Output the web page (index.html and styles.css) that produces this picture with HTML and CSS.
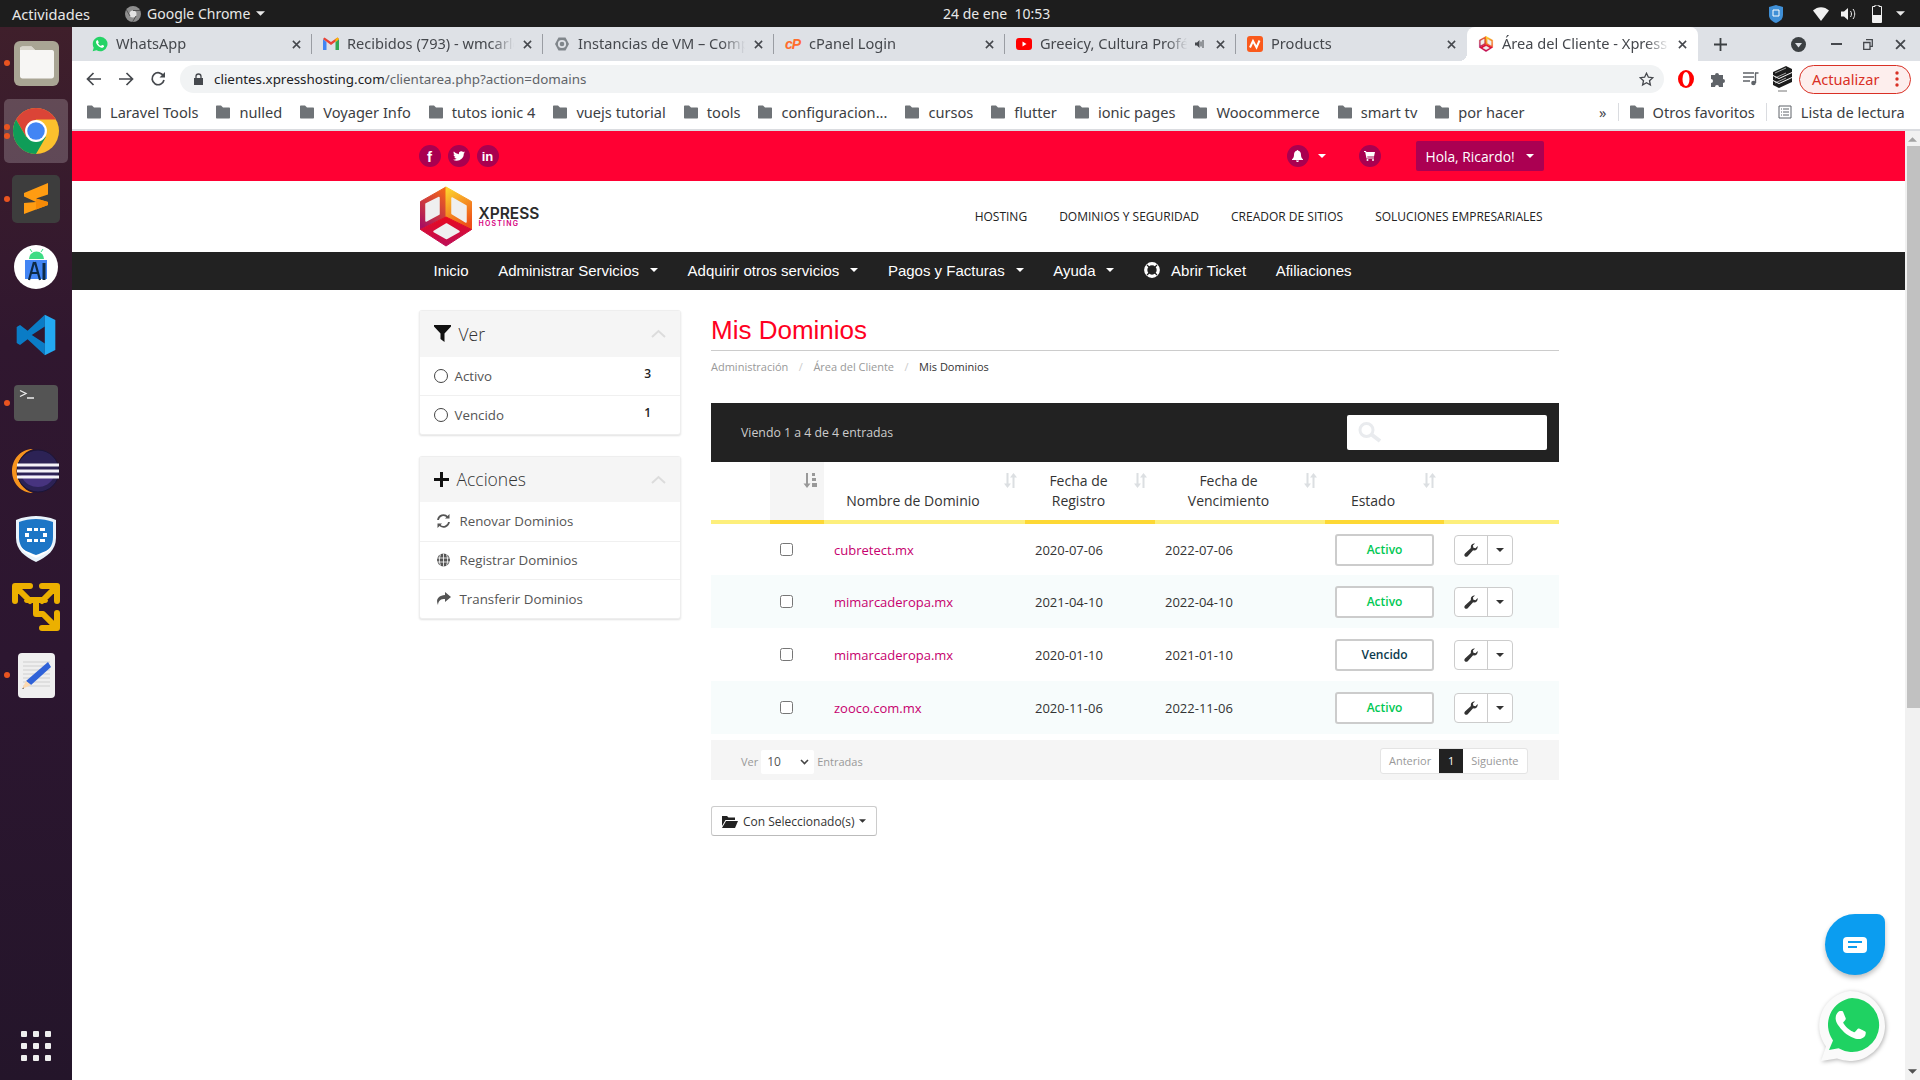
FILE: index.html
```html
<!DOCTYPE html>
<html>
  <head>
    <meta charset="UTF-8" />
    <title>Mis Dominios</title>
    <link rel="stylesheet" href="styles.css">
  </head>
  <body>
    <svg class="defs" width="0" height="0">
      <symbol id="folder" viewBox="0 0 14 14"><path d="M0 1.500C0 .9.4.5 1 .5h4l2 2h6c.6 0 1 .4 1 1v9c0 .6-.4 1-1 1H1c-.6 0-1-.4-1-1z"/></symbol>
      <symbol id="close" viewBox="0 0 10 10"><path d="M1 1l8 8M9 1l-8 8" stroke="#45484d" stroke-width="1.700" fill="none"/></symbol>
      <symbol id="caret" viewBox="0 0 8 4"><path d="M0 0h8L4 4z"/></symbol>
      <symbol id="sort" viewBox="0 0 13 15"><path d="M3 0v10.500H.5L4 15l3.500-4.500H5V0zM10 0L6.500 4.500H9V15h2V4.500h2.500z" transform="translate(-.5)"/></symbol>
      <symbol id="wrench" viewBox="0 0 14 14"><path d="M13.600 3.100c.5 2.300-1.300 4.500-3.600 4.300l-.9-.1-5.400 5.900c-.8.800-2.100.8-2.800 0-.8-.8-.7-2 .1-2.700l5.900-5.400-.1-.9C6.600 1.900 8.700.1 11 .5L8.900 2.600l.5 2.200 2.100.5z"/></symbol>
      <symbol id="xlogo" viewBox="0 0 54 61">
        <defs>
          <linearGradient id="lf" x1="0.700" y1="0" x2="0.200" y2="1"><stop offset="0" stop-color="#f0641c"/><stop offset="1" stop-color="#a80f62"/></linearGradient>
          <linearGradient id="rf" x1="0.200" y1="0" x2="0.600" y2="1"><stop offset="0" stop-color="#fcd22e"/><stop offset="1" stop-color="#ee4e17"/></linearGradient>
          <linearGradient id="bf" x1="0.500" y1="0" x2="0.500" y2="1"><stop offset="0" stop-color="#e9091e"/><stop offset="1" stop-color="#bd0f58"/></linearGradient>
        </defs>
        <path d="M27 1L1.500 15.500v28L27 31z" fill="url(#lf)" stroke="url(#lf)" stroke-linejoin="round"/>
        <path d="M27 1l25.500 14.500v28L27 31z" fill="url(#rf)" stroke="url(#rf)" stroke-linejoin="round"/>
        <path d="M1.500 43.500L27 31l25.500 12.500L27 60z" fill="url(#bf)" stroke="url(#bf)" stroke-linejoin="round"/>
        <path d="M7 18l13-6.500V28L7 35zM33 12l14 8v16l-14-8.500zM15 45.500L27.500 38 40 45.500 27.500 52.500z" fill="#efefef" stroke="#efefef" stroke-width="1.500" stroke-linejoin="round"/>
      </symbol>
    </svg>

    <div class="gnome-bar">
      <div class="gnome-left">
        <span class="activities">Actividades</span>
        <svg class="gnome-chrome" width="16" height="16" viewBox="0 0 16 16"><circle cx="8" cy="8" r="8" fill="#8e8e8e"/><circle cx="8" cy="8" r="3.500" fill="#e4e4e4"/><path d="M8 4.500h7M5 10L1.500 4M11 10l-3.500 6" stroke="#555" stroke-width="1"/></svg>
        <span>Google Chrome</span>
        <svg class="gnome-caret" width="9" height="5"><use href="#caret" fill="#e8e8e8"/></svg>
      </div>
      <div class="gnome-clock">24 de ene&nbsp;&nbsp;10:53</div>
      <div class="gnome-tray">
        <svg class="tray-shield" width="14" height="18" viewBox="0 0 14 18"><path d="M7 0l7 2v8c0 4-3 6.500-7 8-4-1.500-7-4-7-8V2z" fill="#3f8fd6"/><path d="M4 5h6v6H4z" fill="none" stroke="#fff"/></svg>
        <svg class="tray-wifi" width="16" height="14" viewBox="0 0 16 14"><path d="M0 3.500C4.500-1 11.500-1 16 3.500L8 14z" fill="#f0f0f0"/></svg>
        <svg class="tray-vol" width="16" height="14" viewBox="0 0 16 14"><path d="M0 4.500h3L7 1v12L3 9.500H0z" fill="#f0f0f0"/><path d="M9.500 4c1.300 1.800 1.300 4.200 0 6M12 2c2.300 3 2.300 7 0 10" stroke="#f0f0f0" fill="none"/></svg>
        <svg class="tray-batt" width="10" height="18" viewBox="0 0 10 18"><path d="M3 0h4v1.500h2.500v16H.5v-16H3z" fill="none" stroke="#f0f0f0"/><path d="M1 10h8v7H1z" fill="#f0f0f0"/></svg>
        <svg width="9" height="5"><use href="#caret" fill="#e8e8e8"/></svg>
      </div>
    </div>

    <div class="desk">
      <aside class="dock">
        <div class="dock-slot running">
          <svg width="45" height="45" viewBox="0 0 45 45"><rect width="45" height="45" rx="6" fill="#a9a594"/><path d="M6 8c0-1.500 1-2.500 2.500-2.500h9L21 9h17c1.500 0 2 1 2 2.500V35c0 1.500-1 2.500-2.500 2.500h-29C7 37.500 6 36.500 6 35z" fill="#f7f6f4"/><path d="M6 9h15l-3.500-3.500h-9C7 5.500 6 6.500 6 9z" fill="#d9d6cc"/></svg>
        </div>
        <div class="dock-slot active running two">
          <svg width="46" height="46" viewBox="4 4 40 40"><circle cx="24" cy="24" r="20" fill="#fbc02d"/><path d="M6.680 14A20 20 0 0 1 41.320 14H24L15.340 29z" fill="#db4437"/><path d="M6.680 14A20 20 0 0 0 24 44L32.660 29H15.340z" fill="#0f9d58"/><circle cx="24" cy="24" r="9.500" fill="#fff"/><circle cx="24" cy="24" r="7.600" fill="#4285f4"/></svg>
        </div>
        <div class="dock-slot running">
          <svg width="48" height="48" viewBox="0 0 48 48"><rect width="48" height="48" rx="5" fill="#3d3d3d"/><path d="M12 18L36 8v11.500L24 23.500 36 27v3L12 39V28l12-1-12-5.500z" fill="#ff9c12"/><path d="M24 23.500L36 27v3L24 34.500z" fill="#f58a07"/></svg>
        </div>
        <div class="dock-slot">
          <svg width="44" height="44" viewBox="0 0 44 44"><circle cx="22" cy="22" r="22" fill="#fff"/><path d="M11 15h22v19H11z" fill="#4285f4"/><path d="M15 14a7.500 7.500 0 0 1 15 0z" fill="#3ddc84"/><path d="M18 7l-2-3M27 7l2-3" stroke="#3ddc84"/><path d="M20 17L15 35M21 17l5 18M17 28h8" stroke="#0d2a45" stroke-width="2.200" fill="none"/><path d="M30 18v17" stroke="#0d2a45" stroke-width="3"/></svg>
        </div>
        <div class="dock-slot">
          <svg width="42" height="42" viewBox="0 0 100 100"><path d="M71 2L30 40 12 26 4 31v38l8 5 18-14 41 38V70L40 50l31-20z" fill="#0a7cc6"/><path d="M71 2l25 12v72L71 98z" fill="#23a9f2"/></svg>
        </div>
        <div class="dock-slot running">
          <svg width="44" height="36" viewBox="0 0 44 36"><rect width="44" height="36" rx="4" fill="#545454"/><path d="M6 5.500l6 3-6 3" stroke="#eee" stroke-width="1.300" fill="none"/><path d="M13 13h7" stroke="#eee" stroke-width="1.500"/></svg>
        </div>
        <div class="dock-slot">
          <svg width="48" height="44" viewBox="0 0 48 44"><path d="M21 0C9 0 0 10 0 22s9 22 21 22C11 41 5 32 5 22S11 3 21 0z" fill="#f7941e"/><circle cx="26" cy="22" r="21" fill="#2c2255" stroke="#1b1538"/><path d="M9 26c3 9 11 12 17 12s13-3 17-12z" fill="#47347f"/><path d="M5 14.500h42v3H5zM5 20.500h42v3H5zM5 26.500h42v3H5z" fill="#f4f2f8"/></svg>
        </div>
        <div class="dock-slot">
          <svg width="40" height="46" viewBox="0 0 40 46"><path d="M20 0c6 0 13 1 20 4v18c0 12-9 19-20 24C9 41 0 34 0 22V4c7-3 14-4 20-4z" fill="#e9f3fb"/><path d="M20 3c6 0 12 1 17 3v15c0 7-3 12-7 15l-10 5-10-5c-4-3-7-8-7-15V6c5-2 11-3 17-3z" fill="#1c76c6"/><path d="M11 12h5v3h-5zM18 12h4v3h-4zM24 12h5v3h-5zM9 17h4v4H9zM27 17h4v4h-4zM11 23h5v3h-5zM18 23h4v3h-4zM24 23h5v3h-5z" fill="#fff"/><path d="M3 28c2 7 8 10 17 14 9-4 15-7 17-14-3 6-9 8-17 11-8-3-14-5-17-11z" fill="#fff"/></svg>
        </div>
        <div class="dock-slot">
          <svg width="48" height="48" viewBox="0 0 48 48" fill="none" stroke="#ecb000" stroke-width="6" stroke-linecap="round" stroke-linejoin="round"><path d="M3 18V3h15M5 5l13 13M45 18V3H30M43 5L30 18M15 17h18M24 17v9M45 30v15H30M43 43L31 31h-7v-5"/></svg>
        </div>
        <div class="dock-slot running">
          <svg width="37" height="45" viewBox="0 0 37 45"><rect width="37" height="45" rx="4" fill="#efefef"/><path d="M5 9h27M5 13h27M5 17h27M5 21h27M5 25h27M5 29h27M5 33h27" stroke="#cfcfcf"/><path d="M30 9l3 5-20 18-5-4z" fill="#2f62d8"/><path d="M8 28l5 4-9 4z" fill="#fbd9b0"/><path d="M5.500 34.500L4 36l2-.5z" fill="#444"/></svg>
        </div>
        <div class="dock-apps">
          <i></i><i></i><i></i><i></i><i></i><i></i><i></i><i></i><i></i>
        </div>
      </aside>

      <div class="browser">
        <div class="tabstrip">
          <div class="tab">
            <svg class="favicon" viewBox="0 0 24 24"><path d="M12 1a11 11 0 0 0-9.400 16.500L1 23l5.700-1.500A11 11 0 1 0 12 1z" fill="#25d366"/><path d="M17.500 14.400c-.3-.15-1.760-.87-2.030-.97-.27-.1-.47-.15-.67.15-.2.3-.77.97-.94 1.160-.17.2-.35.22-.64.07-.3-.15-1.260-.46-2.390-1.470-.88-.79-1.480-1.760-1.650-2.060-.17-.3-.02-.46.13-.6.13-.13.3-.35.45-.52.15-.17.2-.3.3-.5.1-.2.05-.37-.02-.52-.07-.15-.67-1.610-.92-2.200-.24-.58-.49-.5-.67-.51h-.57c-.2 0-.52.07-.79.37-.27.3-1.040 1.020-1.040 2.480s1.070 2.880 1.210 3.070c.15.2 2.100 3.200 5.080 4.490.71.3 1.260.49 1.690.62.71.23 1.360.2 1.870.12.57-.09 1.760-.72 2-1.410.25-.7.25-1.290.17-1.410-.07-.13-.27-.2-.57-.35z" fill="#fff"/></svg>
            <span class="tab-title">WhatsApp</span>
            <svg class="tab-close"><use href="#close"/></svg>
          </div>
          <div class="tab">
            <svg class="favicon" viewBox="0 0 16 16"><path d="M0 3v11h3.500V6z" fill="#4285f4"/><path d="M12.500 6v8H16V3z" fill="#34a853"/><path d="M0 3l8 6 8-6-1.500-1.500L8 6 1.500 1.500z" fill="#ea4335"/><path d="M12.500 6L16 3l-1.500-1.500-2 1.500z" fill="#fbbc04"/></svg>
            <span class="tab-title">Recibidos (793) - wmcarlos</span>
            <svg class="tab-close"><use href="#close"/></svg>
          </div>
          <div class="tab">
            <svg class="favicon" viewBox="0 0 16 16"><path d="M4.500 1.500h7L15 8l-3.500 6.500h-7L1 8z" fill="#80868b"/><circle cx="8" cy="8" r="3.200" fill="none" stroke="#dee1e6" stroke-width="1.800"/></svg>
            <span class="tab-title">Instancias de VM – Compute</span>
            <svg class="tab-close"><use href="#close"/></svg>
          </div>
          <div class="tab">
            <span class="favicon cpanel-icon">cP</span>
            <span class="tab-title">cPanel Login</span>
            <svg class="tab-close"><use href="#close"/></svg>
          </div>
          <div class="tab">
            <svg class="favicon" viewBox="0 0 16 16"><rect y="2" width="16" height="12" rx="3" fill="#f00"/><path d="M6.500 5.500L10.500 8l-4 2.500z" fill="#fff"/></svg>
            <span class="tab-title">Greeicy, Cultura Profética</span>
            <svg class="tab-audio" width="10" height="10" viewBox="0 0 10 10"><path d="M0 3.500h2L4.500 1v8L2 6.500H0z" fill="#45484d"/><path d="M6 2.500v5M8 1v8" stroke="#45484d"/></svg>
            <svg class="tab-close"><use href="#close"/></svg>
          </div>
          <div class="tab">
            <svg class="favicon" viewBox="0 0 16 16"><rect width="16" height="16" rx="3" fill="#fa5a1c"/><path d="M3 11.500L6 5l3.500 6.500L12.500 4.500" stroke="#fff" stroke-width="2" fill="none"/></svg>
            <span class="tab-title">Products</span>
            <svg class="tab-close"><use href="#close"/></svg>
          </div>
          <div class="tab tab-active">
            <svg class="favicon"><use href="#xlogo"/></svg>
            <span class="tab-title">Área del Cliente - Xpress Hosting</span>
            <svg class="tab-close"><use href="#close"/></svg>
          </div>
          <svg class="tab-new" width="13" height="13" viewBox="0 0 13 13"><path d="M6.500 0v13M0 6.500h13" stroke="#3c4043" stroke-width="1.800"/></svg>
          <div class="win-controls">
            <svg class="win-search" width="15" height="15" viewBox="0 0 15 15"><circle cx="7.500" cy="7.500" r="7.500" fill="#3c4043"/><path d="M4 6h7l-3.500 4.500z" fill="#dee1e6"/></svg>
            <svg class="win-min" width="11" height="2"><path d="M0 1h11" stroke="#45484d" stroke-width="2"/></svg>
            <svg class="win-max" width="10" height="11" viewBox="0 0 10 11"><path d="M3 .7h6.300v6.600H7M.7 3.500H7v6.800H.7z" fill="none" stroke="#45484d" stroke-width="1.300"/></svg>
            <svg class="win-close" width="11" height="11"><use href="#close"/></svg>
          </div>
        </div>

        <div class="toolbar">
          <svg class="tool-ico" width="16" height="14" viewBox="0 0 16 14"><path d="M15 7H2M7.500 1L1.500 7l6 6" fill="none" stroke="#45484d" stroke-width="1.700"/></svg>
          <svg class="tool-ico" width="16" height="14" viewBox="0 0 16 14"><path d="M1 7h13M8.500 1l6 6-6 6" fill="none" stroke="#45484d" stroke-width="1.700"/></svg>
          <svg class="tool-ico" width="16" height="16" viewBox="0 0 16 16"><path d="M13.500 5A6 6 0 1 0 14 9" fill="none" stroke="#45484d" stroke-width="1.700"/><path d="M15 1v5.500H9.500z" fill="#45484d"/></svg>
          <div class="omnibox">
            <svg width="9" height="12" viewBox="0 0 9 12"><path d="M0 5h9v7H0z" fill="#45484d"/><path d="M2 5V3.500a2.500 2.500 0 0 1 5 0V5" fill="none" stroke="#45484d" stroke-width="1.300"/></svg>
            <span class="url"><b>clientes.xpresshosting.com</b>/clientarea.php?action=domains</span>
            <svg class="star" width="15" height="15" viewBox="0 0 15 15"><path d="M7.500 1.200l1.900 4 4.400.5-3.300 3 .9 4.300-3.900-2.200L3.600 13l.9-4.300-3.300-3 4.400-.5z" fill="none" stroke="#45484d" stroke-width="1.300"/></svg>
          </div>
          <div class="extensions">
            <svg width="16" height="18" viewBox="0 0 16 18"><ellipse cx="8" cy="9" rx="8" ry="9" fill="#f00"/><ellipse cx="8" cy="9" rx="3.500" ry="7" fill="#fff"/></svg>
            <svg width="15" height="16" viewBox="0 0 15 16"><path d="M0 4h4a2 2 0 0 1 4 0h4v4a2 2 0 0 1 0 4v4H8a2 2 0 0 0-4 0H0v-4a2 2 0 0 0 0-4z" fill="#5f6368"/></svg>
            <svg width="16" height="14" viewBox="0 0 16 14"><path d="M0 1h11M0 5h11M0 9h7" stroke="#5f6368" stroke-width="1.400"/><path d="M12 1h3.500M12.500 1v10" stroke="#5f6368" stroke-width="1.400"/><circle cx="10.500" cy="11" r="2.300" fill="#5f6368"/></svg>
            <svg width="21" height="26" viewBox="0 0 21 26"><path d="M1 6l13-6 6 3v3L7 12 1 9zM1 10l6 3 13-6v4L7 17l-6-3zM1 15l6 3 13-6v4L7 22l-6-3z" fill="#1c1c1c"/><path d="M3 7l11-5M3 12l11-5M3 17l11-5" stroke="#ddd" stroke-width=".7"/><path d="M6 25h9" stroke="#777"/></svg>
          </div>
          <div class="update-pill">
            <span>Actualizar</span>
            <svg width="4" height="16" viewBox="0 0 4 16" fill="#d93025"><circle cx="2" cy="2" r="1.700"/><circle cx="2" cy="8" r="1.700"/><circle cx="2" cy="14" r="1.700"/></svg>
          </div>
        </div>

        <div class="bookmarks">
          <div class="bm-list">
            <span class="bm"><svg><use href="#folder"/></svg>Laravel Tools</span>
            <span class="bm"><svg><use href="#folder"/></svg>nulled</span>
            <span class="bm"><svg><use href="#folder"/></svg>Voyager Info</span>
            <span class="bm"><svg><use href="#folder"/></svg>tutos ionic 4</span>
            <span class="bm"><svg><use href="#folder"/></svg>vuejs tutorial</span>
            <span class="bm"><svg><use href="#folder"/></svg>tools</span>
            <span class="bm"><svg><use href="#folder"/></svg>configuracion...</span>
            <span class="bm"><svg><use href="#folder"/></svg>cursos</span>
            <span class="bm"><svg><use href="#folder"/></svg>flutter</span>
            <span class="bm"><svg><use href="#folder"/></svg>ionic pages</span>
            <span class="bm"><svg><use href="#folder"/></svg>Woocommerce</span>
            <span class="bm"><svg><use href="#folder"/></svg>smart tv</span>
            <span class="bm"><svg><use href="#folder"/></svg>por hacer</span>
          </div>
          <span class="bm-more">»</span>
          <span class="bm-sep"></span>
          <span class="bm"><svg><use href="#folder"/></svg>Otros favoritos</span>
          <span class="bm-sep bm-sep-2"></span>
          <span class="bm bm-read"><svg class="read-ico" viewBox="0 0 14 14"><path d="M1 1h12v12H1zM3 4h1M5 4h6M3 7h1M5 7h6M3 10h1M5 10h6" fill="none" stroke="#5f6368"/></svg>Lista de lectura</span>
        </div>

        <div class="viewport">
          <div class="page">
            <div class="red-bar">
              <div class="container red-inner">
                <div class="socials">
                  <span class="round round-f">f</span>
                  <span class="round"><svg width="12" height="10" viewBox="0 0 12 10"><path d="M12 1.200c-.4.2-.9.3-1.400.4.500-.3.900-.8 1.100-1.300-.5.3-1 .5-1.600.6A2.500 2.500 0 0 0 5.900 3.200C3.900 3.100 2.100 2.100.9.600c-.7 1.100-.3 2.500.7 3.200-.4 0-.8-.1-1.100-.3 0 1.200.8 2.200 2 2.400-.4.100-.7.100-1.100 0 .3 1 1.200 1.700 2.300 1.700C2.700 8.500 1.400 8.900 0 8.800 4.900 11.300 11 8.400 10.800 2.500c.5-.3.900-.8 1.200-1.300z" fill="#fff"/></svg></span>
                  <span class="round round-in">in</span>
                </div>
                <div class="red-right">
                  <span class="round"><svg width="11" height="12" viewBox="0 0 11 12"><path d="M5.500 0c.5 0 .8.4.8.8C8.300 1.200 9 3 9 5c0 2 .7 3.200 2 4.200V10H0v-.8C1.300 8.200 2 7 2 5c0-2 .7-3.800 2.700-4.200 0-.4.300-.8.800-.8zM4 10.500h3C7 11.400 6.300 12 5.500 12S4 11.400 4 10.500z" fill="#fff"/></svg></span>
                  <svg class="bell-caret" width="8" height="4"><use href="#caret" fill="#fff"/></svg>
                  <span class="round cart"><svg width="11" height="10" viewBox="0 0 11 10"><path d="M0 0h2l.3 1H11l-1 4.500H3.200l.2 1H10V7.500H2.500L1.200 1H0z" fill="#fff"/><circle cx="3.500" cy="9" r="1" fill="#fff"/><circle cx="9" cy="9" r="1" fill="#fff"/></svg></span>
                  <span class="hello">Hola, Ricardo!<svg width="8" height="4"><use href="#caret" fill="#fff"/></svg></span>
                </div>
              </div>
            </div>

            <div class="container site-header">
              <div class="brand">
                <svg width="54" height="61"><use href="#xlogo"/></svg>
                <div class="brand-text"><strong>XPRESS</strong><span>HOSTING</span></div>
              </div>
              <nav class="site-links">
                <a>HOSTING</a>
                <a>DOMINIOS Y SEGURIDAD</a>
                <a>CREADOR DE SITIOS</a>
                <a>SOLUCIONES EMPRESARIALES</a>
              </nav>
            </div>

            <div class="main-nav">
              <div class="container main-nav-inner">
                <a>Inicio</a>
                <a>Administrar Servicios<svg width="8" height="4"><use href="#caret" fill="#fff"/></svg></a>
                <a>Adquirir otros servicios<svg width="8" height="4"><use href="#caret" fill="#fff"/></svg></a>
                <a>Pagos y Facturas<svg width="8" height="4"><use href="#caret" fill="#fff"/></svg></a>
                <a>Ayuda<svg width="8" height="4"><use href="#caret" fill="#fff"/></svg></a>
                <a class="ticket"><svg width="16" height="16" viewBox="0 0 16 16"><circle cx="8" cy="8" r="6.300" fill="none" stroke="#fff" stroke-width="3.200"/><path d="M3 3l3 3M13 3l-3 3M3 13l3-3M13 13l-3-3" stroke="#222" stroke-width="1.200"/></svg>Abrir Ticket</a>
                <a>Afiliaciones</a>
              </div>
            </div>

            <div class="container content">
              <aside class="sidebar">
                <div class="panel">
                  <div class="panel-head">
                    <svg width="17" height="17" viewBox="0 0 17 17"><path d="M0 0h17v1.500L10.500 8.500V17L6.500 14V8.500L0 1.500z" fill="#111"/></svg>
                    <h3>Ver</h3>
                    <svg class="chev" width="15" height="9" viewBox="0 0 15 9"><path d="M1 8l6.500-6L14 8" fill="none" stroke="#dcdcdc" stroke-width="2"/></svg>
                  </div>
                  <div class="panel-row"><i class="radio"></i><span>Activo</span><b class="count">3</b></div>
                  <div class="panel-row"><i class="radio"></i><span>Vencido</span><b class="count">1</b></div>
                </div>
                <div class="panel">
                  <div class="panel-head">
                    <svg width="15" height="15" viewBox="0 0 15 15"><path d="M6 0h3v6h6v3H9v6H6V9H0V6h6z" fill="#111"/></svg>
                    <h3>Acciones</h3>
                    <svg class="chev" width="15" height="9" viewBox="0 0 15 9"><path d="M1 8l6.500-6L14 8" fill="none" stroke="#dcdcdc" stroke-width="2"/></svg>
                  </div>
                  <div class="panel-row action">
                    <svg width="15" height="14" viewBox="0 0 15 14"><path d="M2 6a5.500 5.500 0 0 1 9.500-3M13 8a5.500 5.500 0 0 1-9.500 3" fill="none" stroke="#555" stroke-width="1.800"/><path d="M13.500 0v4.500H9zM1.500 14V9.500H6z" fill="#555"/></svg>
                    <span>Renovar Dominios</span>
                  </div>
                  <div class="panel-row action">
                    <svg width="15" height="14" viewBox="0 0 15 14"><circle cx="7.500" cy="7" r="6.500" fill="#555"/><path d="M1 5h13M1 9h13M7.500 .5v13M4.500 1.500c-1.500 3-1.500 8 0 11M10.500 1.500c1.500 3 1.500 8 0 11" stroke="#fff" stroke-width=".8" fill="none"/></svg>
                    <span>Registrar Dominios</span>
                  </div>
                  <div class="panel-row action">
                    <svg width="15" height="14" viewBox="0 0 15 14"><path d="M9 0l6 5-6 5V7C5 7 2.500 8 2 13-.5 8 2 3.500 9 3z" fill="#555"/></svg>
                    <span>Transferir Dominios</span>
                  </div>
                </div>
              </aside>

              <main class="domains">
                <h1>Mis Dominios</h1>
                <div class="crumbs">
                  <a>Administración</a><i>/</i><a>Área del Cliente</a><i>/</i><span>Mis Dominios</span>
                </div>

                <div class="table-top">
                  <span>Viendo 1 a 4 de 4 entradas</span>
                  <div class="search">
                    <svg width="24" height="21" viewBox="0 0 24 21"><circle cx="8.500" cy="8" r="6.500" fill="none" stroke="#e9ebee" stroke-width="3"/><path d="M13.500 12.500L22 19" stroke="#e9ebee" stroke-width="4"/></svg>
                  </div>
                </div>

                <table class="grid">
                  <colgroup>
                    <col class="c0"><col class="c1"><col class="c2"><col class="c3"><col class="c4"><col class="c5"><col class="c6">
                  </colgroup>
                  <thead>
                    <tr>
                      <th></th>
                      <th class="sorted shaded"><svg class="sort-ico active-sort" viewBox="0 0 14 15"><path d="M3 0v10.500H.5L4 15l3.500-4.500H5V0zM9 0h3v3H9zM9 5h4v3H9zM9 10h5v4H9z"/></svg></th>
                      <th>Nombre de Dominio<svg class="sort-ico"><use href="#sort"/></svg></th>
                      <th class="sorted">Fecha de<br>Registro<svg class="sort-ico"><use href="#sort"/></svg></th>
                      <th>Fecha de<br>Vencimiento<svg class="sort-ico"><use href="#sort"/></svg></th>
                      <th class="sorted">Estado<svg class="sort-ico"><use href="#sort"/></svg></th>
                      <th></th>
                    </tr>
                  </thead>
                  <tbody>
                    <tr>
                      <td></td><td><input type="checkbox"></td>
                      <td><a class="domain">cubretect.mx</a></td>
                      <td>2020-07-06</td><td>2022-07-06</td>
                      <td><span class="status ok">Activo</span></td>
                      <td><span class="split"><i><svg width="14" height="14"><use href="#wrench"/></svg></i><i><svg width="8" height="4"><use href="#caret"/></svg></i></span></td>
                    </tr>
                    <tr>
                      <td></td><td><input type="checkbox"></td>
                      <td><a class="domain">mimarcaderopa.mx</a></td>
                      <td>2021-04-10</td><td>2022-04-10</td>
                      <td><span class="status ok">Activo</span></td>
                      <td><span class="split"><i><svg width="14" height="14"><use href="#wrench"/></svg></i><i><svg width="8" height="4"><use href="#caret"/></svg></i></span></td>
                    </tr>
                    <tr>
                      <td></td><td><input type="checkbox"></td>
                      <td><a class="domain">mimarcaderopa.mx</a></td>
                      <td>2020-01-10</td><td>2021-01-10</td>
                      <td><span class="status off">Vencido</span></td>
                      <td><span class="split"><i><svg width="14" height="14"><use href="#wrench"/></svg></i><i><svg width="8" height="4"><use href="#caret"/></svg></i></span></td>
                    </tr>
                    <tr>
                      <td></td><td><input type="checkbox"></td>
                      <td><a class="domain">zooco.com.mx</a></td>
                      <td>2020-11-06</td><td>2022-11-06</td>
                      <td><span class="status ok">Activo</span></td>
                      <td><span class="split"><i><svg width="14" height="14"><use href="#wrench"/></svg></i><i><svg width="8" height="4"><use href="#caret"/></svg></i></span></td>
                    </tr>
                  </tbody>
                </table>

                <div class="table-foot">
                  <div class="per-page">
                    <span>Ver</span>
                    <span class="fake-select">10<svg width="9" height="6" viewBox="0 0 9 6"><path d="M1 1l3.500 3.500L8 1" fill="none" stroke="#444" stroke-width="1.600"/></svg></span>
                    <span>Entradas</span>
                  </div>
                  <div class="pager"><a>Anterior</a><a class="current">1</a><a>Siguiente</a></div>
                </div>

                <button class="bulk">
                  <svg width="16" height="13" viewBox="0 0 16 13"><path d="M0 1h5l1.500 1.500H13V5H3.500L0 11z" fill="#222"/><path d="M4 6h12l-3 7H0z" fill="#222"/></svg>
                  Con Seleccionado(s)
                  <svg width="7" height="4"><use href="#caret" fill="#333"/></svg>
                </button>
              </main>
            </div>

            <div class="chat-bubble">
              <svg width="24" height="16" viewBox="0 0 24 16"><rect width="24" height="16" rx="4" fill="#fff"/><path d="M5 5h14M5 10h9" stroke="#0b9df0" stroke-width="2"/></svg>
            </div>
            <div class="wa-float">
              <svg width="70" height="70" viewBox="0 0 70 70"><path d="M35 0a35 35 0 1 1-13 67.500L6 70l5-14.500A35 35 0 0 1 35 0z" fill="#fafafa"/><path d="M37 7a27 27 0 1 1-13.500 50.300L14 59l4-9.500A27 27 0 0 1 37 7z" fill="#1fd262"/><g transform="translate(5.500 4) scale(2.500)"><path d="M17.500 14.400c-.3-.15-1.760-.87-2.030-.97-.27-.1-.47-.15-.67.15-.2.3-.77.97-.94 1.160-.17.2-.35.22-.64.07-.3-.15-1.260-.46-2.390-1.470-.88-.79-1.480-1.760-1.650-2.060-.17-.3-.02-.46.13-.6.13-.13.3-.35.45-.52.15-.17.2-.3.3-.5.1-.2.05-.37-.02-.52-.07-.15-.67-1.610-.92-2.200-.24-.58-.49-.5-.67-.51h-.57c-.2 0-.52.07-.79.37-.27.3-1.040 1.020-1.040 2.480s1.070 2.880 1.210 3.070c.15.2 2.100 3.200 5.080 4.490.71.3 1.260.49 1.690.62.71.23 1.360.2 1.870.12.57-.09 1.760-.72 2-1.410.25-.7.25-1.290.17-1.410-.07-.13-.27-.2-.57-.35z" fill="#fff"/></g></svg>
            </div>
          </div>

          <div class="scrollbar">
            <svg class="sb-arrow" width="9" height="5" viewBox="0 0 8 4"><path d="M0 4h8L4 0z" fill="#a3a3a3"/></svg>
            <div class="sb-thumb"></div>
            <svg class="sb-arrow sb-down" width="9" height="5"><use href="#caret" fill="#505050"/></svg>
          </div>
        </div>
      </div>
    </div>
  </body>
</html>
```

FILE: styles.css
```css
* {
  box-sizing: border-box;
}

html,
body {
  margin: 0;
  height: 100%;
  overflow: hidden;
}

body {
  display: flex;
  flex-direction: column;
  width: 1920px;
  height: 1080px;
  font-family: "Open Sans", sans-serif;
  color: #333;
  background: #fff;
}

.defs {
  position: absolute;
}

/* desktop top bar */
.gnome-bar {
  flex: 0 0 27px;
  display: flex;
  align-items: center;
  background: #1d1d1d;
  color: #e8e8e8;
  font-family: "Noto Sans", sans-serif;
  font-size: 14px;
}

.gnome-left {
  width: 943px;
  display: flex;
  align-items: center;
  padding-left: 12px;
}

.activities {
  width: 113px;
  font-size: 14.6px;
}

.gnome-chrome {
  margin-right: 6px;
}

.gnome-caret {
  margin-left: 6px;
}

.gnome-clock {
  width: 106px;
  white-space: nowrap;
}

.gnome-tray {
  display: flex;
  align-items: center;
  margin-left: auto;
  padding-right: 15px;
}

.tray-wifi {
  margin-left: 30px;
}

.tray-vol {
  margin-left: 12px;
}

.tray-batt {
  margin-left: 15px;
  margin-right: 14px;
}

/* dock */
.desk {
  flex: 1;
  display: flex;
  min-height: 0;
}

.dock {
  flex: 0 0 72px;
  display: flex;
  flex-direction: column;
  padding-top: 2px;
  padding-bottom: 19px;
  background: linear-gradient(#3f1f2b, #30172f 30%, #2c1630 60%, #24152a);
}

.dock-slot {
  position: relative;
  flex: 0 0 68px;
  display: flex;
  align-items: center;
  justify-content: center;
}

.dock-slot.active::before {
  content: "";
  position: absolute;
  left: 4px;
  top: 2px;
  width: 64px;
  height: 64px;
  border-radius: 5px;
  background: rgba(255, 255, 255, 0.2);
}

.dock-slot svg {
  position: relative;
}

.dock-slot.running::after {
  content: "";
  position: absolute;
  left: 4px;
  top: 31px;
  width: 6px;
  height: 6px;
  border-radius: 50%;
  background: #e95420;
}

.dock-slot.two::after {
  top: 27px;
  box-shadow: 0 9px 0 #e95420;
}

.dock-apps {
  margin-top: auto;
  margin-left: 21px;
  display: grid;
  grid-template-columns: repeat(3, 6px);
  gap: 6px;
}

.dock-apps i {
  height: 6px;
  border-radius: 1px;
  background: #efefef;
}

/* browser chrome */
.browser {
  flex: 1;
  min-width: 0;
  display: flex;
  flex-direction: column;
}

.tabstrip {
  flex: 0 0 34px;
  display: flex;
  align-items: center;
  padding-left: 9px;
  background: #dee1e6;
}

.tab {
  position: relative;
  flex: 0 0 231px;
  min-width: 0;
  height: 34px;
  display: flex;
  align-items: center;
  padding: 0 11px 0 11px;
  font-family: "Noto Sans", sans-serif;
  font-size: 14.6px;
  color: #45484d;
}

.tab::after {
  content: "";
  position: absolute;
  right: 0;
  top: 7px;
  height: 20px;
  width: 1px;
  background: #9a9da3;
}

.tab:nth-child(6)::after,
.tab-active::after {
  display: none;
}

.tab-active {
  background: #fff;
  border-radius: 8px 8px 0 0;
}

.tab-active::before {
  content: "";
  position: absolute;
  left: -8px;
  bottom: 0;
  width: 8px;
  height: 8px;
  background: radial-gradient(circle at 0 0, transparent 8px, #fff 8px);
}

.favicon {
  flex: 0 0 16px;
  width: 16px;
  height: 16px;
  margin-right: 8px;
}

.cpanel-icon {
  font-family: "Liberation Sans", sans-serif;
  font-size: 14px;
  font-weight: 700;
  font-style: italic;
  line-height: 16px;
  letter-spacing: -1px;
  color: #ff6c2c;
}

.tab-title {
  flex: 1;
  min-width: 0;
  margin-top: -2px;
  overflow: hidden;
  white-space: nowrap;
  -webkit-mask-image: linear-gradient(to right, #000 85%, transparent 99%);
  mask-image: linear-gradient(to right, #000 85%, transparent 99%);
}

.tab-audio {
  flex: none;
  margin: 0 4.5px 0 6px;
}

.tab-close {
  flex: 0 0 9px;
  width: 9px;
  height: 9px;
  margin-left: 7px;
}

.tab-new {
  margin-left: 16px;
}

.win-controls {
  display: flex;
  align-items: center;
  margin-left: 64px;
}

.win-min {
  margin-left: 25px;
}

.win-max {
  margin-left: 21px;
}

.win-close {
  margin-left: 22px;
}

.toolbar {
  flex: 0 0 36px;
  display: flex;
  align-items: center;
  padding: 0 9px 0 14px;
  background: #fff;
}

.tool-ico {
  flex: none;
  margin-right: 16px;
}

.omnibox {
  flex: 0 0 1484px;
  height: 28px;
  margin-left: -2px;
  display: flex;
  align-items: center;
  padding: 0 10px 0 14px;
  border-radius: 14px;
  background: #f1f3f4;
}

.url {
  margin-left: 11px;
  font-family: "Noto Sans", sans-serif;
  font-size: 13.4px;
  color: #5f6368;
  white-space: nowrap;
}

.url b {
  font-weight: 400;
  color: #202124;
}

.star {
  margin-left: auto;
}

.extensions {
  flex: 1;
  display: flex;
  align-items: center;
  padding-left: 14px;
}

.extensions svg {
  margin-right: 17px;
}

.extensions svg:last-child {
  margin-right: 0;
  margin-left: -4px;
}

.update-pill {
  flex: 0 0 112px;
  height: 29px;
  display: flex;
  align-items: center;
  justify-content: space-between;
  padding: 0 11px 0 12px;
  border: 1px solid #d93025;
  border-radius: 15px;
  background: #fdeeed;
  font-family: "Noto Sans", sans-serif;
  font-size: 14.6px;
  color: #d93025;
}

.bookmarks {
  flex: 0 0 34px;
  display: flex;
  align-items: center;
  padding: 0 0 3px 15px;
  border-bottom: 2px solid #dadce0;
  font-family: "Noto Sans", sans-serif;
  font-size: 14.6px;
  color: #3c4043;
  background: #fff;
}

.bm-list {
  display: flex;
  gap: 18px;
  width: 1512px;
}

.bm {
  display: inline-flex;
  align-items: center;
  white-space: nowrap;
}

.bm svg {
  flex: none;
  width: 14px;
  height: 14px;
  margin-right: 9px;
  fill: #6f7377;
}

.bm-more {
  width: 18.5px;
  color: #45484d;
}

.bm-sep {
  width: 1px;
  height: 18px;
  margin-right: 11px;
  background: #dadce0;
}

.bm-sep-2 {
  margin-left: 11px;
}

.bm .read-ico {
  fill: none;
  margin-right: 9px;
}

/* page */
.viewport {
  flex: 1;
  min-height: 0;
  display: flex;
}

.page {
  position: relative;
  flex: 1;
  min-width: 0;
}

.container {
  width: 1170px;
  margin: 0 auto;
  padding: 0 15px;
}

.red-bar {
  height: 50px;
  background: #ff0033;
}

.red-inner {
  height: 50px;
  display: flex;
  align-items: center;
  justify-content: space-between;
}

.socials,
.red-right {
  display: flex;
  align-items: center;
}

.socials {
  gap: 7px;
}

.round {
  width: 22px;
  height: 22px;
  display: inline-flex;
  align-items: center;
  justify-content: center;
  border-radius: 50%;
  background: #a90050;
  color: #fff;
  font-family: "Liberation Sans", sans-serif;
  font-size: 13px;
  font-weight: 700;
}

.round-f {
  font-size: 15px;
}

.round-in {
  font-size: 13px;
}

.bell-caret {
  margin-left: 9px;
}

.cart {
  margin-left: 33px;
}

.hello {
  width: 128px;
  height: 30px;
  margin-left: 35px;
  margin-right: 15px;
  display: flex;
  align-items: center;
  justify-content: space-between;
  padding: 0 10px;
  border-radius: 2px;
  background: #ab0052;
  color: #fff;
  font-size: 13.8px;
}

.site-header {
  height: 71px;
  display: flex;
  align-items: center;
  justify-content: space-between;
}

.brand {
  display: flex;
  align-items: center;
}

.brand-text {
  margin-left: 6px;
  display: flex;
  flex-direction: column;
}

.brand-text strong {
  font-family: "Inter", sans-serif;
  font-size: 15.5px;
  line-height: 13px;
  font-weight: 600;
  color: #2b2b2b;
}

.brand-text span {
  font-family: "Inter", sans-serif;
  font-size: 7px;
  line-height: 7px;
  font-weight: 600;
  letter-spacing: 1.2px;
  color: #d6007f;
}

.site-links {
  display: flex;
  gap: 32px;
  padding-right: 16px;
  font-size: 12px;
  color: #222;
}

.main-nav {
  height: 38px;
  background: #222;
}

.main-nav-inner {
  height: 38px;
  display: flex;
  align-items: center;
  gap: 29.6px;
  padding-left: 30px;
  padding-bottom: 2px;
  font-family: "Liberation Sans", sans-serif;
  font-size: 15px;
  color: #fff;
}

.main-nav-inner a {
  display: flex;
  align-items: center;
}

.main-nav-inner a svg {
  margin-left: 11px;
}

.main-nav-inner .ticket svg {
  margin-left: 0;
  margin-right: 11px;
}

.content {
  display: flex;
  gap: 30px;
  padding-top: 20px;
}

.sidebar {
  flex: 0 0 262.5px;
}

.panel {
  margin-bottom: 21px;
  border: 1px solid #eee;
  border-radius: 3px;
  box-shadow: 0 1px 2px rgba(0, 0, 0, 0.12);
  background: #fff;
}

.panel-head {
  height: 45.5px;
  display: flex;
  align-items: center;
  padding: 0 14px;
  background: #f5f5f5;
}

.panel-head h3 {
  margin: 0 0 0 8px;
  font-size: 17.5px;
  font-weight: 300;
  color: #333;
}

.chev {
  margin-left: auto;
}

.panel-row {
  height: 38.5px;
  display: flex;
  align-items: center;
  padding: 0 14px;
  border-top: 1px solid #f0f0f0;
  font-size: 13.3px;
  color: #555;
}

.panel-head + .panel-row {
  border-top: 0;
}

.radio {
  width: 14px;
  height: 14px;
  margin-right: 7px;
  border: 1.5px solid #444;
  border-radius: 50%;
}

.count {
  margin-left: auto;
  margin-right: 15px;
  margin-top: -5px;
  font-size: 12px;
  font-weight: 600;
  color: #222;
}

.action svg {
  flex: none;
  margin: 0 9px 0 2px;
}

.domains {
  flex: 1;
  min-width: 0;
}

.domains h1 {
  margin: 0;
  height: 41px;
  padding-top: 4px;
  border-bottom: 1px solid #ccc;
  font-family: "Liberation Sans", sans-serif;
  font-size: 26px;
  line-height: 32px;
  font-weight: 400;
  color: #ff0022;
}

.crumbs {
  height: 52px;
  display: flex;
  padding-top: 8px;
  font-size: 11px;
  line-height: 15px;
  color: #999;
}

.crumbs i {
  font-style: normal;
  color: #ccc;
  margin: 0 10.5px;
}

.crumbs span {
  color: #333;
}

.table-top {
  height: 59px;
  display: flex;
  align-items: center;
  justify-content: space-between;
  padding: 0 12px 0 30px;
  background: #222;
  font-size: 12.3px;
  color: #ccc;
}

.search {
  width: 200px;
  height: 35px;
  display: flex;
  align-items: center;
  padding-left: 11px;
  border-radius: 2px;
  background: #fff;
}

.grid {
  width: 100%;
  table-layout: fixed;
  border-collapse: collapse;
  font-size: 13px;
}

.c0 { width: 59px; }
.c1 { width: 54px; }
.c2 { width: 201px; }
.c3 { width: 130px; }
.c4 { width: 170px; }
.c5 { width: 119px; }
.c6 { width: 115px; }

.grid th {
  position: relative;
  height: 60px;
  padding: 8px 23px 9px 0;
  vertical-align: bottom;
  border-bottom: 4px solid #fdef7c;
  font-size: 14px;
  line-height: 20px;
  font-weight: 400;
  color: #333;
}

.grid th.sorted {
  border-bottom-color: #fdd835;
}

.grid th.shaded {
  background: #f5f5f5;
}

.sort-ico {
  position: absolute;
  right: 8px;
  top: 11px;
  width: 13px;
  height: 15px;
  fill: #dcdfe2;
}

.sort-ico.active-sort {
  right: 7px;
  width: 14px;
  fill: #999;
}

.grid td {
  height: 53px;
  padding: 0 0 0 10px;
  vertical-align: middle;
  color: #333;
}

.grid tbody tr:nth-child(even) td {
  background: #f7fcfc;
}

.grid input {
  display: block;
  width: 13px;
  height: 13px;
  margin: 0;
}

.domain {
  color: #c6006e;
}

.status {
  display: block;
  width: 99px;
  height: 32px;
  border: 2px solid #ccc;
  border-radius: 3px;
  background: #fff;
  font-size: 12px;
  font-weight: 600;
  line-height: 28px;
  text-align: center;
}

.status.ok {
  color: #00c853;
}

.status.off {
  color: #0b3a4d;
}

.split {
  display: flex;
  width: 59px;
  height: 30px;
  border: 1px solid #ccc;
  border-radius: 4px;
  background: #fff;
}

.split i {
  flex: 0 0 32px;
  display: flex;
  align-items: center;
  justify-content: center;
}

.split i + i {
  flex: 1;
  border-left: 1px solid #ccc;
}

.split svg {
  fill: #333;
}

.table-foot {
  height: 40px;
  margin-top: 6px;
  display: flex;
  align-items: center;
  justify-content: space-between;
  padding: 0 31px 0 30px;
  background: #f5f5f5;
  font-size: 11px;
  color: #999;
}

.per-page {
  display: flex;
  align-items: center;
  margin-top: 3px;
}

.fake-select {
  width: 53px;
  height: 24px;
  margin: 0 3px;
  display: flex;
  align-items: center;
  justify-content: space-between;
  padding: 0 5px 0 6px;
  border-radius: 2px;
  background: #fff;
  font-size: 12px;
  color: #555;
}

.pager {
  display: flex;
  height: 26px;
  margin-top: 2px;
  border: 1px solid #e4e4e4;
  border-radius: 3px;
  background: #fff;
  line-height: 23px;
}

.pager a {
  padding: 0 8px;
}

.pager .current {
  width: 24px;
  padding: 0;
  text-align: center;
  background: #222;
  color: #fff;
}

.bulk {
  width: 166px;
  height: 30px;
  margin-top: 26px;
  display: flex;
  align-items: center;
  gap: 5px;
  padding: 0 0 0 10px;
  border: 1px solid #ccc;
  border-bottom-color: #bbb;
  border-radius: 3px;
  background: #fff;
  font-family: "Open Sans", sans-serif;
  font-size: 12px;
  color: #333;
  white-space: nowrap;
}

/* floating widgets */
.chat-bubble {
  position: absolute;
  left: 1753px;
  top: 783px;
  width: 60px;
  height: 61px;
  display: flex;
  align-items: center;
  justify-content: center;
  border-radius: 50% 8px 50% 50%;
  background: #0b9df0;
  box-shadow: 0 3px 5px rgba(0, 0, 0, 0.25);
}

.wa-float {
  position: absolute;
  left: 1743px;
  top: 860px;
  width: 70px;
  height: 70px;
  filter: drop-shadow(1px 1px 2px rgba(0, 0, 0, 0.3));
}

.scrollbar {
  position: relative;
  flex: 0 0 15px;
  display: flex;
  flex-direction: column;
  align-items: center;
  background: #f1f1f1;
}

.sb-arrow {
  flex: none;
  margin-top: 6px;
}

.sb-thumb {
  width: 13px;
  height: 562px;
  margin-top: 4px;
  margin-left: 2px;
  background: #c1c1c1;
}

.sb-down {
  margin-top: auto;
  margin-bottom: 6px;
}
```
